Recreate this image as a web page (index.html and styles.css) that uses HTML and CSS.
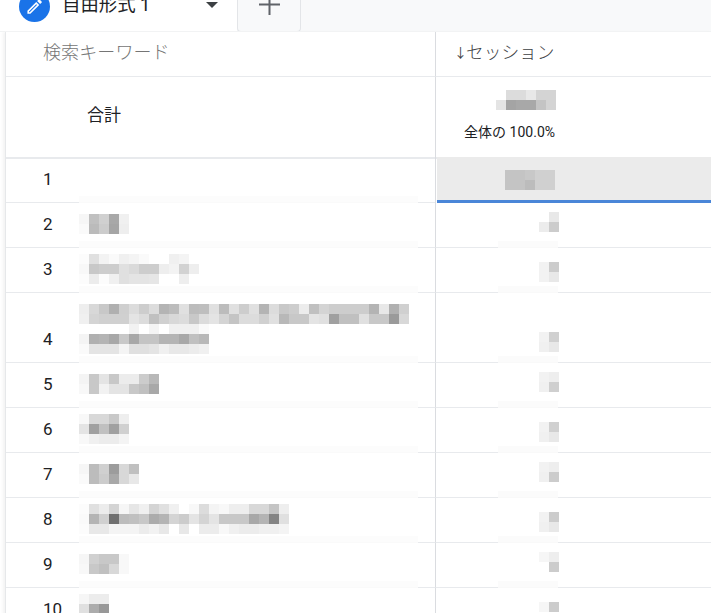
FILE: index.html
```html
<!DOCTYPE html>
<html lang="ja">
<head>
<meta charset="utf-8">
<title>自由形式 1</title>
<link rel="stylesheet" href="styles.css">
</head>
<body>
<div class="tabbar">
  <div class="tab">
    <svg class="tab-badge" width="31" height="31" viewBox="0 0 31 31"><circle cx="15.5" cy="15.5" r="15.5" fill="#1a73e8"/><path transform="translate(6 6) scale(.8)" fill="#fff" d="M14.06 9.02l.92.92L5.92 19H5v-.92l9.06-9.06M17.66 3c-.25 0-.51.1-.7.29l-1.83 1.83 3.75 3.75 1.83-1.83c.39-.39.39-1.02 0-1.41l-2.34-2.34c-.2-.2-.45-.29-.71-.29zm-3.6 3.19L3 17.25V21h3.75L17.81 9.94l-3.75-3.75z"/></svg>
    <span class="tab-title">自由形式 1</span>
    <svg class="tab-caret" width="12" height="6" viewBox="0 0 12 6"><path d="M0 0h12L6 6z" fill="#3c4043"/></svg>
  </div>
  <div class="tab-add">
    <svg width="21" height="21" viewBox="0 0 21 21"><path d="M0 10.5h21M10.5 0v21" stroke="#5f6368" stroke-width="2" fill="none"/></svg>
  </div>
</div>
<div class="table">
  <div class="row row-head">
    <div class="cell head-label">検索キーワード</div>
    <div class="cell head-value"><span class="sort-arrow">↓</span>セッション</div>
  </div>
  <div class="row row-total">
    <div class="cell total-label">合計</div>
    <div class="cell total-value">
      <svg class="mosaic" width="60" height="20">
        <rect x="10" fill="#dcdcdc"/><rect x="20" fill="#dcdcdc"/><rect x="30" fill="#e8e8e8"/><rect x="40" fill="#d4d4d4"/><rect x="50" fill="#d4d4d4"/>
        <rect y="10" x="0" fill="#e4e4e4"/><rect y="10" x="10" fill="#a4a4a4"/><rect y="10" x="20" fill="#a8a8a8"/><rect y="10" x="30" fill="#a8a8a8"/><rect y="10" x="40" fill="#c4c4c4"/><rect y="10" x="50" fill="#d4d4d4"/>
      </svg>
      <span class="total-share">全体の 100.0%</span>
    </div>
    <div class="cell total-rest"></div>
  </div>
  <div class="row row-first">
    <div class="cell idx">1</div>
    <div class="cell kw"></div>
    <div class="cell gutter"></div>
    <div class="cell first-value">
      <svg class="mosaic" width="50" height="20">
        <rect x="0" fill="#c4c4c4"/><rect x="10" fill="#c4c4c4"/><rect x="20" fill="#c8c8c8"/><rect x="30" fill="#d0d0d0"/><rect x="40" fill="#d0d0d0"/>
        <rect y="10" x="0" fill="#c4c4c4"/><rect y="10" x="10" fill="#c4c4c4"/><rect y="10" x="20" fill="#bcbcbc"/><rect y="10" x="30" fill="#d0d0d0"/><rect y="10" x="40" fill="#d0d0d0"/>
      </svg>
    </div>
  </div>
  <div class="row">
    <div class="cell idx">2</div>
    <div class="cell kw kw-low">
      <svg class="mosaic" width="50" height="20">
        <rect x="0" fill="#f6f6f6"/><rect x="10" fill="#c0c0c0"/><rect x="20" fill="#d0d0d0"/><rect x="30" fill="#a8a8a8"/><rect x="40" fill="#f0f0f0"/>
        <rect y="10" x="0" fill="#fafafa"/><rect y="10" x="10" fill="#bbbbbb"/><rect y="10" x="20" fill="#cccccc"/><rect y="10" x="30" fill="#a5a5a5"/><rect y="10" x="40" fill="#eeeeee"/>
      </svg>
    </div>
    <div class="cell gutter"></div>
    <div class="cell val-a"></div>
    <div class="cell val-b val-high">
      <svg class="mosaic" width="20" height="20"><rect x="10" fill="#e8e8e8"/><rect y="10" x="0" fill="#ececec"/><rect y="10" x="10" fill="#cccccc"/></svg>
    </div>
    <div class="cell rest"></div>
  </div>
  <div class="row">
    <div class="cell idx">3</div>
    <div class="cell kw kw-high">
      <svg class="mosaic" width="120" height="30">
        <rect x="0" fill="#fcfcfc"/><rect x="10" fill="#e0e0e0"/><rect x="20" fill="#f3f3f3"/><rect x="30" fill="#fafafa"/><rect x="40" fill="#f0f0f0"/><rect x="50" fill="#f4f4f4"/><rect x="60" fill="#fafafa"/><rect x="90" fill="#f0f0f0"/><rect x="100" fill="#f4f4f4"/>
        <rect y="10" x="0" fill="#f8f8f8"/><rect y="10" x="10" fill="#c8c8c8"/><rect y="10" x="20" fill="#cdcdcd"/><rect y="10" x="30" fill="#cdcdcd"/><rect y="10" x="40" fill="#e0e0e0"/><rect y="10" x="50" fill="#dadada"/><rect y="10" x="60" fill="#cdcdcd"/><rect y="10" x="70" fill="#cdcdcd"/><rect y="10" x="80" fill="#eeeeee"/><rect y="10" x="90" fill="#f3f3f3"/><rect y="10" x="100" fill="#d2d2d2"/><rect y="10" x="110" fill="#eeeeee"/>
        <rect y="20" x="0" fill="#fcfcfc"/><rect y="20" x="10" fill="#ececec"/><rect y="20" x="20" fill="#fcfcfc"/><rect y="20" x="30" fill="#f0f0f0"/><rect y="20" x="40" fill="#e0e0e0"/><rect y="20" x="50" fill="#e4e4e4"/><rect y="20" x="60" fill="#e4e4e4"/><rect y="20" x="70" fill="#e6e6e6"/><rect y="20" x="100" fill="#eeeeee"/>
      </svg>
    </div>
    <div class="cell gutter"></div>
    <div class="cell val-a"></div>
    <div class="cell val-b val-low">
      <svg class="mosaic" width="20" height="20"><rect x="0" fill="#f2f2f2"/><rect x="10" fill="#cccccc"/><rect y="10" x="0" fill="#f2f2f2"/><rect y="10" x="10" fill="#e8e8e8"/></svg>
    </div>
    <div class="cell rest"></div>
  </div>
  <div class="row row-tall">
    <div class="cell idx">4</div>
    <div class="cell kw kw-low">
      <svg class="mosaic" width="330" height="50">
        <rect x="0" fill="#eeeeee"/><rect x="10" fill="#d8d8d8"/><rect x="20" fill="#c8c8c8"/><rect x="30" fill="#b0b0b0"/><rect x="40" fill="#cfcfcf"/><rect x="50" fill="#dcdcdc"/><rect x="60" fill="#cdcdcd"/><rect x="70" fill="#dcdcdc"/><rect x="80" fill="#b4b4b4"/><rect x="90" fill="#bcbcbc"/><rect x="100" fill="#e0e0e0"/><rect x="110" fill="#bcbcbc"/><rect x="120" fill="#bebebe"/><rect x="130" fill="#e0e0e0"/><rect x="140" fill="#bcbcbc"/><rect x="150" fill="#e0e0e0"/><rect x="160" fill="#cdcdcd"/><rect x="170" fill="#e0e0e0"/><rect x="180" fill="#b4b4b4"/><rect x="190" fill="#dcdcdc"/><rect x="200" fill="#c8c8c8"/><rect x="210" fill="#cdcdcd"/><rect x="220" fill="#ececec"/><rect x="230" fill="#c0c0c0"/><rect x="240" fill="#d4d4d4"/><rect x="250" fill="#cdcdcd"/><rect x="260" fill="#cdcdcd"/><rect x="270" fill="#cdcdcd"/><rect x="280" fill="#cdcdcd"/><rect x="290" fill="#b4b4b4"/><rect x="300" fill="#e8e8e8"/><rect x="310" fill="#b0b0b0"/><rect x="320" fill="#d0d0d0"/>
        <rect y="10" x="0" fill="#f0f0f0"/><rect y="10" x="10" fill="#d4d4d4"/><rect y="10" x="20" fill="#d0d0d0"/><rect y="10" x="30" fill="#d0d0d0"/><rect y="10" x="40" fill="#d0d0d0"/><rect y="10" x="50" fill="#e4e4e4"/><rect y="10" x="60" fill="#dcdcdc"/><rect y="10" x="70" fill="#c0c0c0"/><rect y="10" x="80" fill="#d0d0d0"/><rect y="10" x="90" fill="#d8d8d8"/><rect y="10" x="100" fill="#dcdcdc"/><rect y="10" x="110" fill="#c8c8c8"/><rect y="10" x="120" fill="#dcdcdc"/><rect y="10" x="130" fill="#e4e4e4"/><rect y="10" x="140" fill="#d4d4d4"/><rect y="10" x="150" fill="#c4c4c4"/><rect y="10" x="160" fill="#dcdcdc"/><rect y="10" x="170" fill="#dcdcdc"/><rect y="10" x="180" fill="#d0d0d0"/><rect y="10" x="190" fill="#e0e0e0"/><rect y="10" x="200" fill="#b8b8b8"/><rect y="10" x="210" fill="#c8c8c8"/><rect y="10" x="220" fill="#c8c8c8"/><rect y="10" x="230" fill="#e4e4e4"/><rect y="10" x="240" fill="#e0e0e0"/><rect y="10" x="250" fill="#a0a0a0"/><rect y="10" x="260" fill="#c0c0c0"/><rect y="10" x="270" fill="#c0c0c0"/><rect y="10" x="280" fill="#e0e0e0"/><rect y="10" x="290" fill="#c8c8c8"/><rect y="10" x="300" fill="#c8c8c8"/><rect y="10" x="310" fill="#9a9a9a"/><rect y="10" x="320" fill="#d8d8d8"/>
        <rect y="20" x="50" fill="#f2f2f2"/><rect y="20" x="70" fill="#f4f4f4"/><rect y="20" x="90" fill="#f0f0f0"/><rect y="20" x="100" fill="#f0f0f0"/><rect y="20" x="110" fill="#f0f0f0"/><rect y="20" x="120" fill="#fafafa"/>
        <rect y="30" x="0" fill="#f4f4f4"/><rect y="30" x="10" fill="#b0b0b0"/><rect y="30" x="20" fill="#b4b4b4"/><rect y="30" x="30" fill="#a8a8a8"/><rect y="30" x="40" fill="#c8c8c8"/><rect y="30" x="50" fill="#a8a8a8"/><rect y="30" x="60" fill="#c4c4c4"/><rect y="30" x="70" fill="#c4c4c4"/><rect y="30" x="80" fill="#b4b4b4"/><rect y="30" x="90" fill="#b4b4b4"/><rect y="30" x="100" fill="#a8a8a8"/><rect y="30" x="110" fill="#c0c0c0"/><rect y="30" x="120" fill="#b8b8b8"/>
        <rect y="40" x="0" fill="#fafafa"/><rect y="40" x="10" fill="#e4e4e4"/><rect y="40" x="20" fill="#e4e4e4"/><rect y="40" x="30" fill="#e4e4e4"/><rect y="40" x="40" fill="#f4f4f4"/><rect y="40" x="50" fill="#e0e0e0"/><rect y="40" x="60" fill="#e0e0e0"/><rect y="40" x="70" fill="#e4e4e4"/><rect y="40" x="80" fill="#f0f0f0"/><rect y="40" x="90" fill="#e8e8e8"/><rect y="40" x="100" fill="#e8e8e8"/><rect y="40" x="110" fill="#ececec"/><rect y="40" x="120" fill="#f0f0f0"/>
      </svg>
    </div>
    <div class="cell gutter"></div>
    <div class="cell val-a"></div>
    <div class="cell val-b val-tall">
      <svg class="mosaic" width="20" height="20"><rect x="0" fill="#f2f2f2"/><rect x="10" fill="#d0d0d0"/><rect y="10" x="0" fill="#f0f0f0"/><rect y="10" x="10" fill="#e8e8e8"/></svg>
    </div>
    <div class="cell rest"></div>
  </div>
  <div class="row">
    <div class="cell idx">5</div>
    <div class="cell kw kw-low">
      <svg class="mosaic" width="80" height="20">
        <rect x="0" fill="#f4f4f4"/><rect x="10" fill="#c8c8c8"/><rect x="20" fill="#e4e4e4"/><rect x="30" fill="#c8c8c8"/><rect x="40" fill="#ececec"/><rect x="50" fill="#ececec"/><rect x="60" fill="#cccccc"/><rect x="70" fill="#b8b8b8"/>
        <rect y="10" x="0" fill="#f8f8f8"/><rect y="10" x="10" fill="#c8c8c8"/><rect y="10" x="20" fill="#f2f2f2"/><rect y="10" x="30" fill="#e4e4e4"/><rect y="10" x="40" fill="#e4e4e4"/><rect y="10" x="50" fill="#c8c8c8"/><rect y="10" x="60" fill="#c0c0c0"/><rect y="10" x="70" fill="#a8a8a8"/>
      </svg>
    </div>
    <div class="cell gutter"></div>
    <div class="cell val-a"></div>
    <div class="cell val-b val-high">
      <svg class="mosaic" width="20" height="20"><rect x="0" fill="#f2f2f2"/><rect x="10" fill="#eeeeee"/><rect y="10" x="0" fill="#f0f0f0"/><rect y="10" x="10" fill="#cfcfcf"/></svg>
    </div>
    <div class="cell rest"></div>
  </div>
  <div class="row">
    <div class="cell idx">6</div>
    <div class="cell kw kw-high">
      <svg class="mosaic" width="50" height="30">
        <rect x="0" fill="#f8f8f8"/><rect x="10" fill="#d8d8d8"/><rect x="20" fill="#d8d8d8"/><rect x="30" fill="#c8c8c8"/><rect x="40" fill="#eeeeee"/>
        <rect y="10" x="0" fill="#e4e4e4"/><rect y="10" x="10" fill="#a0a0a0"/><rect y="10" x="20" fill="#c0c0c0"/><rect y="10" x="30" fill="#a0a0a0"/><rect y="10" x="40" fill="#d0d0d0"/>
        <rect y="20" x="0" fill="#f8f8f8"/><rect y="20" x="10" fill="#f0f0f0"/><rect y="20" x="20" fill="#ececec"/><rect y="20" x="30" fill="#ececec"/><rect y="20" x="40" fill="#f4f4f4"/>
      </svg>
    </div>
    <div class="cell gutter"></div>
    <div class="cell val-a"></div>
    <div class="cell val-b val-low">
      <svg class="mosaic" width="20" height="20"><rect x="0" fill="#f2f2f2"/><rect x="10" fill="#d0d0d0"/><rect y="10" x="0" fill="#f0f0f0"/><rect y="10" x="10" fill="#e8e8e8"/></svg>
    </div>
    <div class="cell rest"></div>
  </div>
  <div class="row">
    <div class="cell idx">7</div>
    <div class="cell kw kw-low">
      <svg class="mosaic" width="60" height="20">
        <rect x="0" fill="#f6f6f6"/><rect x="10" fill="#bcbcbc"/><rect x="20" fill="#d0d0d0"/><rect x="30" fill="#9c9c9c"/><rect x="40" fill="#d8d8d8"/><rect x="50" fill="#c0c0c0"/>
        <rect y="10" x="0" fill="#fafafa"/><rect y="10" x="10" fill="#bcbcbc"/><rect y="10" x="20" fill="#cccccc"/><rect y="10" x="30" fill="#a8a8a8"/><rect y="10" x="40" fill="#d8d8d8"/><rect y="10" x="50" fill="#e8e8e8"/>
      </svg>
    </div>
    <div class="cell gutter"></div>
    <div class="cell val-a"></div>
    <div class="cell val-b val-high">
      <svg class="mosaic" width="20" height="20"><rect x="0" fill="#f2f2f2"/><rect x="10" fill="#eeeeee"/><rect y="10" x="0" fill="#f0f0f0"/><rect y="10" x="10" fill="#cccccc"/></svg>
    </div>
    <div class="cell rest"></div>
  </div>
  <div class="row">
    <div class="cell idx">8</div>
    <div class="cell kw kw-high">
      <svg class="mosaic" width="210" height="30">
        <rect x="0" fill="#fcfcfc"/><rect x="10" fill="#e0e0e0"/><rect x="20" fill="#ececec"/><rect x="30" fill="#d4d4d4"/><rect x="40" fill="#f6f6f6"/><rect x="50" fill="#e6e6e6"/><rect x="60" fill="#f0f0f0"/><rect x="70" fill="#d4d4d4"/><rect x="80" fill="#e0e0e0"/><rect x="90" fill="#f0f0f0"/><rect x="110" fill="#f8f8f8"/><rect x="120" fill="#dcdcdc"/><rect x="130" fill="#f4f4f4"/><rect x="140" fill="#f8f8f8"/><rect x="150" fill="#eeeeee"/><rect x="160" fill="#eeeeee"/><rect x="170" fill="#d8d8d8"/><rect x="180" fill="#d8d8d8"/><rect x="190" fill="#c4c4c4"/><rect x="200" fill="#eeeeee"/>
        <rect y="10" x="0" fill="#fafafa"/><rect y="10" x="10" fill="#b4b4b4"/><rect y="10" x="20" fill="#d0d0d0"/><rect y="10" x="30" fill="#707070"/><rect y="10" x="40" fill="#bcbcbc"/><rect y="10" x="50" fill="#c0c0c0"/><rect y="10" x="60" fill="#c8c8c8"/><rect y="10" x="70" fill="#acacac"/><rect y="10" x="80" fill="#b4b4b4"/><rect y="10" x="90" fill="#d4d4d4"/><rect y="10" x="100" fill="#cccccc"/><rect y="10" x="110" fill="#e4e4e4"/><rect y="10" x="120" fill="#d4d4d4"/><rect y="10" x="130" fill="#e4e4e4"/><rect y="10" x="140" fill="#c8c8c8"/><rect y="10" x="150" fill="#c8c8c8"/><rect y="10" x="160" fill="#c8c8c8"/><rect y="10" x="170" fill="#a8a8a8"/><rect y="10" x="180" fill="#b4b4b4"/><rect y="10" x="190" fill="#848484"/><rect y="10" x="200" fill="#e0e0e0"/>
        <rect y="20" x="0" fill="#fcfcfc"/><rect y="20" x="10" fill="#e8e8e8"/><rect y="20" x="20" fill="#e8e8e8"/><rect y="20" x="30" fill="#f4f4f4"/><rect y="20" x="40" fill="#f4f4f4"/><rect y="20" x="50" fill="#f4f4f4"/><rect y="20" x="60" fill="#ececec"/><rect y="20" x="70" fill="#f2f2f2"/><rect y="20" x="80" fill="#e8e8e8"/><rect y="20" x="100" fill="#e8e8e8"/><rect y="20" x="120" fill="#ececec"/><rect y="20" x="130" fill="#ececec"/><rect y="20" x="140" fill="#f8f8f8"/><rect y="20" x="150" fill="#f0f0f0"/><rect y="20" x="160" fill="#ececec"/><rect y="20" x="170" fill="#ececec"/><rect y="20" x="180" fill="#f0f0f0"/><rect y="20" x="190" fill="#f0f0f0"/><rect y="20" x="200" fill="#f4f4f4"/>
      </svg>
    </div>
    <div class="cell gutter"></div>
    <div class="cell val-a"></div>
    <div class="cell val-b val-low">
      <svg class="mosaic" width="20" height="20"><rect x="0" fill="#f2f2f2"/><rect x="10" fill="#cccccc"/><rect y="10" x="0" fill="#f0f0f0"/><rect y="10" x="10" fill="#e8e8e8"/></svg>
    </div>
    <div class="cell rest"></div>
  </div>
  <div class="row">
    <div class="cell idx">9</div>
    <div class="cell kw kw-low">
      <svg class="mosaic" width="50" height="20">
        <rect x="0" fill="#f6f6f6"/><rect x="10" fill="#d0d0d0"/><rect x="20" fill="#c8c8c8"/><rect x="30" fill="#c8c8c8"/><rect x="40" fill="#f8f8f8"/>
        <rect y="10" x="0" fill="#f8f8f8"/><rect y="10" x="10" fill="#c8c8c8"/><rect y="10" x="20" fill="#c0c0c0"/><rect y="10" x="30" fill="#d8d8d8"/><rect y="10" x="40" fill="#f8f8f8"/>
      </svg>
    </div>
    <div class="cell gutter"></div>
    <div class="cell val-a"></div>
    <div class="cell val-b val-high">
      <svg class="mosaic" width="20" height="20"><rect x="0" fill="#f6f6f6"/><rect x="10" fill="#eeeeee"/><rect y="10" x="10" fill="#cccccc"/></svg>
    </div>
    <div class="cell rest"></div>
  </div>
  <div class="row">
    <div class="cell idx">10</div>
    <div class="cell kw kw-high">
      <svg class="mosaic" width="30" height="20">
        <rect x="0" fill="#f6f6f6"/><rect x="10" fill="#ececec"/><rect x="20" fill="#ececec"/>
        <rect y="10" x="0" fill="#e0e0e0"/><rect y="10" x="10" fill="#acacac"/><rect y="10" x="20" fill="#989898"/>
      </svg>
    </div>
    <div class="cell gutter"></div>
    <div class="cell val-a"></div>
    <div class="cell val-b val-low">
      <svg class="mosaic" width="20" height="20"><rect x="0" fill="#f6f6f6"/><rect x="10" fill="#cccccc"/></svg>
    </div>
    <div class="cell rest"></div>
  </div>
</div>
</body>
</html>
```
FILE: styles.css
```css
* { box-sizing: border-box; }
html, body { margin: 0; height: 100%; overflow: hidden; background: #fff; }
body { font-family: Roboto, "Noto Sans CJK JP", sans-serif; color: #202124; }

.tabbar { display: flex; height: 32px; overflow: hidden; background: #f8f9fa; border-bottom: 1px solid #f1f3f4; }
.tab { display: flex; align-items: flex-end; width: 237px; height: 32px; padding-left: 19px; background: #fff; }
.tab-badge { flex: none; margin-bottom: 10px; }
.tab-title { margin: 0 0 15px 12px; font-size: 18.4px; line-height: 24px; white-space: nowrap; }
.tab-caret { flex: none; margin: 0 19px 24px auto; }
.tab-add { display: flex; justify-content: center; align-items: flex-end; width: 64px; height: 32px; padding-bottom: 16px; background: #f8f9fa; border: 1px solid #e3e5e8; border-top: 0; border-radius: 0 0 4px 4px; }

.table { margin-left: 5px; border-left: 1px solid #e6e8ea; box-shadow: -2px 0 3px #f3f3f3; }
.row { display: grid; grid-template-columns: 73px 339px 17px 63px 60px 1fr; height: 45px; }
.row-tall { height: 70px; }
.row-first { height: 44px; }
.row-head { height: 45px; }
.row-total { height: 82px; }

.cell { border-bottom: 1px solid #e8eaed; }
.idx { display: flex; align-items: flex-end; padding: 0 0 11px 37px; font-size: 17px; line-height: 24px; }
.kw { border-bottom-color: #fafafa; background: linear-gradient(#fcfcfc, #fcfcfc) bottom / 100% 6px no-repeat; }
.kw-low { padding-top: 11px; }
.kw-high { padding-top: 6px; }
.val-a { border-left: 1px solid #dadce0; }
.val-b { display: flex; justify-content: flex-end; border-bottom-color: #f9f9f9; background: linear-gradient(#fbfbfb, #fbfbfb) bottom / 100% 6px no-repeat; }
.val-b .mosaic { margin-right: -1px; }
.val-high { padding-top: 9px; }
.val-low { padding-top: 14px; }
.val-tall { padding-top: 39px; }

.mosaic { display: block; shape-rendering: crispEdges; overflow: hidden; }
.mosaic rect { width: 10px; height: 10px; }

.head-label { grid-column: 1 / 4; padding: 9px 0 0 37px; font-size: 18px; letter-spacing: .1px; line-height: 24px; color: #757575; font-weight: 300; }
.head-value { grid-column: 4 / 7; display: flex; align-items: center; height: 45px; padding: 0 0 3px 18px; border-left: 1px solid #dadce0; font-size: 17.7px; line-height: 24px; color: #3c4043; font-weight: 300; }
.sort-arrow { width: 12px; font-size: 13px; font-weight: 400; }

.total-label { grid-column: 1 / 4; display: flex; align-items: center; padding: 0 0 4px 81px; font-size: 17px; line-height: 24px; border-bottom-width: 2px; }
.total-value { grid-column: 4 / 6; display: flex; flex-direction: column; align-items: flex-end; padding: 13px 3px 0 0; border-left: 1px solid #dadce0; border-bottom-width: 2px; }
.total-value .mosaic { margin-right: -1px; }
.total-share { margin-top: 12px; font-size: 14px; line-height: 20px; white-space: nowrap; }
.total-rest { border-bottom-width: 2px; }

.first-value { grid-column: 4 / 7; margin-top: -2px; padding: 13px 0 0 69px; border-left: 1px solid #dadce0; border-bottom: 0; position: relative; }
.first-value::before { content: ""; position: absolute; inset: 0 0 0 1px; background: #ebebeb; border-bottom: 3px solid #4a86d8; }
.first-value .mosaic { position: relative; }
```
